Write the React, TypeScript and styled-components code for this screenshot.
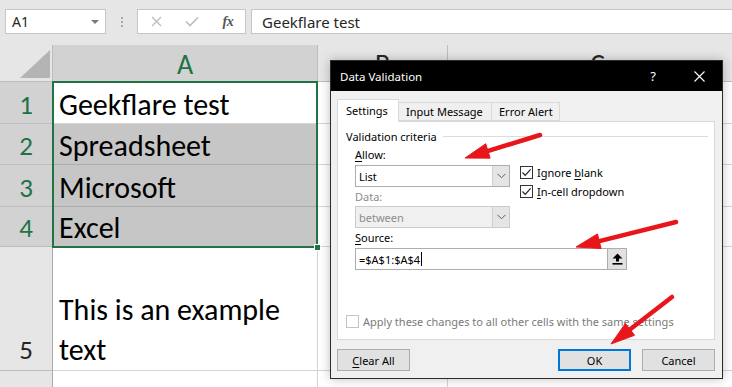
import React from "react";
import styled, { createGlobalStyle } from "styled-components";

const UI = `"Segoe UI", "Noto Sans", "Open Sans", sans-serif`;
const SHEET = `Calibri, Carlito, Lato, "Noto Sans", sans-serif`;

const GlobalStyle = createGlobalStyle`
  html, body { margin: 0; padding: 0; background: #fff; }
  body { width: 732px; height: 387px; overflow: hidden; }
  * { box-sizing: border-box; }
`;

const Page = styled.div`
  position: relative;
  width: 732px;
  height: 387px;
  overflow: hidden;
  display: flex;
  flex-direction: column;
  background: #e6e6e6;
`;

/* ---------- formula bar ---------- */
const FormulaBar = styled.div`
  height: 45px;
  flex: none;
  display: flex;
  align-items: flex-start;
  padding: 9px 0 0 5px;
  background: #e6e6e6;
  font-family: ${UI};
`;

const NameBox = styled.div`
  width: 101px;
  height: 25px;
  flex: none;
  background: #fff;
  border: 1px solid #c6c6c6;
  display: flex;
  align-items: center;
  justify-content: space-between;
  padding: 0 6px 0 6px;
  font-size: 14px;
  color: #262626;
`;

const Caret = styled.span`
  width: 0;
  height: 0;
  border-left: 4px solid transparent;
  border-right: 4px solid transparent;
  border-top: 4px solid #7a7a7a;
`;

const Grip = styled.div`
  width: 31px;
  height: 25px;
  flex: none;
  display: flex;
  flex-direction: column;
  align-items: center;
  justify-content: center;
  gap: 2px;
`;

const GripDot = styled.span`
  width: 2px;
  height: 2px;
  background: #a8a8a8;
`;

const FxBox = styled.div`
  width: 109px;
  height: 25px;
  flex: none;
  background: #fff;
  border: 1px solid #c6c6c6;
  display: flex;
  align-items: center;
`;

const FxSlot = styled.div<{ $w: number }>`
  width: ${(p) => p.$w}px;
  height: 100%;
  display: flex;
  align-items: center;
  justify-content: center;
`;

const FxText = styled.span`
  font-family: "Liberation Serif", serif;
  font-style: italic;
  font-weight: bold;
  font-size: 14px;
  color: #555;
  letter-spacing: -0.5px;
`;

const FormulaInput = styled.div`
  flex: 1;
  margin-left: 5px;
  height: 25px;
  background: #fff;
  border: 1px solid #c6c6c6;
  border-right: none;
  display: flex;
  align-items: center;
  padding-left: 10px;
  font-size: 15px;
  color: #262626;
`;

/* ---------- sheet grid ---------- */
const Sheet = styled.div`
  flex: 1;
  position: relative;
  display: grid;
  grid-template-columns: 53px 265px 130px 300px;
  grid-template-rows: 37px 42px 41px 42px 40px 124px 42px;
  background: #fff;
  font-family: ${SHEET};
`;

const Corner = styled.div`
  background: #e6e6e6;
  border-right: 1px solid #bdbdbd;
  border-bottom: 1px solid #bdbdbd;
  display: flex;
  justify-content: flex-end;
  align-items: flex-end;
  padding: 0 2px 3px 0;
`;

const CornerTriangle = styled.span`
  width: 0;
  height: 0;
  border-left: 30px solid transparent;
  border-bottom: 28px solid #b4b4b4;
`;

const ColHeader = styled.div<{ $sel?: boolean }>`
  background: ${(p) => (p.$sel ? "#d2d2d2" : "#e6e6e6")};
  border-right: 1px solid #bdbdbd;
  border-bottom: 1px solid #bdbdbd;
  display: flex;
  align-items: center;
  justify-content: center;
  font-size: 28px;
  color: ${(p) => (p.$sel ? "#217346" : "#262626")};
  padding-top: 2px;
`;

const RowHeader = styled.div<{ $sel?: boolean; $lh?: number; $pad?: number; $top?: boolean }>`
  background: ${(p) => (p.$sel ? "#d2d2d2" : "#e6e6e6")};
  border-right: 1px solid #ababab;
  border-bottom: 1px solid #bdbdbd;
  display: flex;
  align-items: ${(p) => (p.$top ? "flex-start" : "flex-end")};
  justify-content: center;
  font-size: 27px;
  line-height: ${(p) => p.$lh ?? 36}px;
  color: ${(p) => (p.$sel ? "#217346" : "#262626")};
  padding-top: ${(p) => (p.$top ? 10 : 0)}px;
  padding-bottom: ${(p) => p.$pad ?? 0}px;
  overflow: hidden;
`;

const Cell = styled.div<{ $shade?: boolean; $lh?: number; $pad?: number; $top?: boolean }>`
  background: ${(p) => (p.$shade ? "#c6c6c6" : "#fff")};
  border-right: 1px solid #d4d4d4;
  border-bottom: 1px solid ${(p) => (p.$shade ? "#adadad" : "#d4d4d4")};
  display: flex;
  align-items: ${(p) => (p.$top ? "flex-start" : "flex-end")};
  padding: ${(p) => (p.$top ? 10 : 0)}px 4px ${(p) => p.$pad ?? 0}px 6px;
  font-size: 30px;
  line-height: ${(p) => p.$lh ?? 36}px;
  color: #000;
  overflow: hidden;
`;

const Selection = styled.div`
  position: absolute;
  grid-column: 2 / 3;
  grid-row: 2 / 6;
  left: -1px;
  top: -1px;
  right: 0;
  bottom: -1px;
  border: 2px solid #217346;
  pointer-events: none;
`;

const FillHandle = styled.span`
  position: absolute;
  right: -5px;
  bottom: -5px;
  width: 7px;
  height: 7px;
  background: #217346;
  border: 1px solid #fff;
`;

/* ---------- dialog ---------- */
const Dialog = styled.div`
  position: absolute;
  left: 330px;
  top: 60px;
  width: 393px;
  height: 319px;
  background: #f0f0f0;
  border: 1px solid #2b2b2b;
  box-shadow: 0 0 10px rgba(0, 0, 0, 0.25);
  display: flex;
  flex-direction: column;
  font-family: ${UI};
  font-size: 11px;
  color: #000;
  z-index: 5;
`;

const TitleBar = styled.div`
  height: 30px;
  flex: none;
  background: #000;
  color: #fff;
  display: flex;
  align-items: center;
  padding-left: 9px;
  font-size: 11.5px;
`;

const TitleText = styled.span`
  flex: 1;
`;

const TitleBtn = styled.span<{ $w: number }>`
  width: ${(p) => p.$w}px;
  display: flex;
  justify-content: center;
  align-items: center;
  font-size: 13px;
`;

const Body = styled.div`
  flex: 1;
  display: flex;
  flex-direction: column;
  padding: 8px 7px 0 6px;
`;

const TabRow = styled.div`
  display: flex;
  align-items: flex-end;
  height: 22px;
  position: relative;
  z-index: 1;
`;

const Tab = styled.div<{ $active?: boolean; $w: number }>`
  width: ${(p) => p.$w}px;
  height: ${(p) => (p.$active ? 23 : 19)}px;
  background: ${(p) => (p.$active ? "#fff" : "#f0f0f0")};
  border: 1px solid #d9d9d9;
  border-bottom: ${(p) => (p.$active ? "none" : "1px solid #d9d9d9")};
  margin-left: ${(p) => (p.$active ? 0 : -1)}px;
  margin-bottom: ${(p) => (p.$active ? -1 : 0)}px;
  display: flex;
  align-items: center;
  padding-left: ${(p) => (p.$active ? 8 : 7)}px;
  padding-bottom: ${(p) => (p.$active ? 1 : 0)}px;
`;

const Panel = styled.div`
  height: 219px;
  background: #fff;
  border: 1px solid #d9d9d9;
  display: flex;
  flex-direction: column;
  padding: 6px 6px 0 8px;
`;

const GroupTitle = styled.div`
  display: flex;
  align-items: center;
  gap: 6px;
  height: 16px;
`;

const GroupLine = styled.span`
  flex: 1;
  height: 1px;
  background: #dcdcdc;
`;

const Criteria = styled.div`
  padding-left: 9px;
  display: flex;
  flex-direction: column;
`;

const CriteriaTop = styled.div`
  display: flex;
  margin-top: 3px;
`;

const LeftCol = styled.div`
  width: 155px;
  display: flex;
  flex-direction: column;
`;

const Label = styled.div<{ $dim?: boolean; $gap?: number }>`
  height: 16px;
  line-height: 16px;
  color: ${(p) => (p.$dim ? "#8d8d8d" : "#000")};
  margin-bottom: ${(p) => p.$gap ?? 2}px;
`;

const Combo = styled.div<{ $disabled?: boolean }>`
  width: 155px;
  height: 22px;
  display: flex;
  border: 1px solid ${(p) => (p.$disabled ? "#cccccc" : "#adadad")};
  background: ${(p) => (p.$disabled ? "#f0f0f0" : "#fff")};
  color: ${(p) => (p.$disabled ? "#8d8d8d" : "#000")};
  margin-bottom: 2px;
`;

const ComboText = styled.span`
  flex: 1;
  display: flex;
  align-items: center;
  padding-left: 3px;
`;

const ComboBtn = styled.span`
  width: 17px;
  background: #e5e5e5;
  border-left: 1px solid #cfcfcf;
  display: flex;
  align-items: center;
  justify-content: center;
`;

const RightCol = styled.div`
  margin-left: 10px;
  padding-top: 19px;
  display: flex;
  flex-direction: column;
  gap: 6px;
`;

const CheckRow = styled.div<{ $dim?: boolean }>`
  display: flex;
  align-items: center;
  gap: 4px;
  height: 13px;
  color: ${(p) => (p.$dim ? "#7a7a7a" : "#000")};
`;

const Box = styled.span<{ $dim?: boolean }>`
  width: 13px;
  height: 13px;
  flex: none;
  border: 1px solid ${(p) => (p.$dim ? "#c4c4c4" : "#333")};
  background: #fff;
  display: flex;
  align-items: center;
  justify-content: center;
`;

const SourceRow = styled.div`
  display: flex;
  width: 272px;
  height: 22px;
`;

const SourceInput = styled.div`
  flex: 1;
  border: 1px solid #adadad;
  border-right: none;
  background: #fff;
  display: flex;
  align-items: center;
  padding-left: 3px;
`;

const Caretline = styled.span`
  width: 1px;
  height: 14px;
  background: #000;
  margin-left: 1px;
`;

const RefBtn = styled.span`
  width: 20px;
  border: 1px solid #adadad;
  background: #e1e1e1;
  display: flex;
  align-items: center;
  justify-content: center;
`;

const ApplyRow = styled.div`
  margin-top: auto;
  margin-bottom: 11px;
`;

const Footer = styled.div`
  display: flex;
  align-items: center;
  gap: 11px;
  margin-top: 9px;
`;

const FooterSpacer = styled.span`
  flex: 1;
`;

const Button = styled.div<{ $primary?: boolean }>`
  width: 73px;
  height: 22px;
  background: #e1e1e1;
  border: ${(p) => (p.$primary ? "2px solid #0078d7" : "1px solid #adadad")};
  display: flex;
  align-items: center;
  justify-content: center;
`;

const U = styled.span`
  text-decoration: underline;
  text-underline-offset: 2px;
`;

/* ---------- arrows overlay ---------- */
const Overlay = styled.svg`
  position: absolute;
  left: 0;
  top: 0;
  width: 732px;
  height: 387px;
  pointer-events: none;
  z-index: 10;
`;

const Arrow = ({ x1, y1, x2, y2 }: { x1: number; y1: number; x2: number; y2: number }) => {
  const dx = x2 - x1;
  const dy = y2 - y1;
  const len = Math.hypot(dx, dy);
  const ux = dx / len;
  const uy = dy / len;
  const L = 24;
  const W = 7.5;
  const bx = x2 - ux * L;
  const by = y2 - uy * L;
  const px = -uy;
  const py = ux;
  const pts = `${x2},${y2} ${bx + px * W},${by + py * W} ${bx - px * W},${by - py * W}`;
  return (
    <g fill="#e8161b" stroke="#e8161b">
      <line x1={x1} y1={y1} x2={bx + ux * 3} y2={by + uy * 3} strokeWidth={4.5} strokeLinecap="round" />
      <polygon points={pts} strokeWidth={1} strokeLinejoin="round" />
    </g>
  );
};

const Check = () => (
  <svg width="11" height="11" viewBox="0 0 11 11">
    <path d="M1.5 5.5 L4.2 8.3 L9.6 2.4" fill="none" stroke="#222" strokeWidth="1.2" />
  </svg>
);

const Chevron = () => (
  <svg width="9" height="6" viewBox="0 0 9 6">
    <path d="M0.5 0.8 L4.5 4.8 L8.5 0.8" fill="none" stroke="#606060" strokeWidth="1" />
  </svg>
);

const rows = [
  { n: "1", t: "Geekflare test", shade: false },
  { n: "2", t: "Spreadsheet", shade: true },
  { n: "3", t: "Microsoft", shade: true },
  { n: "4", t: "Excel", shade: true },
];

export default function App() {
  return (
    <>
      <GlobalStyle />
      <Page>
        <FormulaBar>
          <NameBox>
            <span>A1</span>
            <Caret />
          </NameBox>
          <Grip>
            <GripDot />
            <GripDot />
            <GripDot />
          </Grip>
          <FxBox>
            <FxSlot $w={37}>
              <svg width="11" height="11" viewBox="0 0 11 11">
                <path d="M1 1 L10 10 M10 1 L1 10" stroke="#bdbdbd" strokeWidth="1.3" />
              </svg>
            </FxSlot>
            <FxSlot $w={37}>
              <svg width="14" height="11" viewBox="0 0 14 11">
                <path d="M1 5.5 L5 9.5 L13 1.5" fill="none" stroke="#bdbdbd" strokeWidth="1.6" />
              </svg>
            </FxSlot>
            <FxSlot $w={35}>
              <FxText>fx</FxText>
            </FxSlot>
          </FxBox>
          <FormulaInput>Geekflare test</FormulaInput>
        </FormulaBar>

        <Sheet>
          <Corner>
            <CornerTriangle />
          </Corner>
          <ColHeader $sel>A</ColHeader>
          <ColHeader>B</ColHeader>
          <ColHeader>C</ColHeader>

          {rows.map((r) => (
            <React.Fragment key={r.n}>
              <RowHeader $sel>{r.n}</RowHeader>
              <Cell $shade={r.shade}>{r.t}</Cell>
              <Cell />
              <Cell />
            </React.Fragment>
          ))}

          <RowHeader $lh={40}>5</RowHeader>
          <Cell $lh={40}>
            <span>This is an example text</span>
          </Cell>
          <Cell />
          <Cell />

          <RowHeader $top>6</RowHeader>
          <Cell $top>look</Cell>
          <Cell />
          <Cell />

          <Selection>
            <FillHandle />
          </Selection>
        </Sheet>

        <Dialog>
          <TitleBar>
            <TitleText>Data Validation</TitleText>
            <TitleBtn $w={30}>?</TitleBtn>
            <TitleBtn $w={16} />
            <TitleBtn $w={30}>
              <svg width="11" height="11" viewBox="0 0 11 11">
                <path d="M0.5 0.5 L10.5 10.5 M10.5 0.5 L0.5 10.5" stroke="#fff" strokeWidth="1.1" />
              </svg>
            </TitleBtn>
            <TitleBtn $w={8} />
          </TitleBar>
          <Body>
            <TabRow>
              <Tab $active $w={62}>Settings</Tab>
              <Tab $w={94}>Input Message</Tab>
              <Tab $w={69}>Error Alert</Tab>
            </TabRow>
            <Panel>
              <GroupTitle>
                <span>Validation criteria</span>
                <GroupLine />
              </GroupTitle>
              <Criteria>
                <CriteriaTop>
                  <LeftCol>
                    <Label>
                      <U>A</U>llow:
                    </Label>
                    <Combo>
                      <ComboText>List</ComboText>
                      <ComboBtn>
                        <Chevron />
                      </ComboBtn>
                    </Combo>
                    <Label $dim $gap={1}>Data:</Label>
                    <Combo $disabled>
                      <ComboText>between</ComboText>
                      <ComboBtn>
                        <Chevron />
                      </ComboBtn>
                    </Combo>
                  </LeftCol>
                  <RightCol>
                    <CheckRow>
                      <Box>
                        <Check />
                      </Box>
                      <span>
                        Ignore <U>b</U>lank
                      </span>
                    </CheckRow>
                    <CheckRow>
                      <Box>
                        <Check />
                      </Box>
                      <span>
                        <U>I</U>n-cell dropdown
                      </span>
                    </CheckRow>
                  </RightCol>
                </CriteriaTop>
                <Label>
                  <U>S</U>ource:
                </Label>
                <SourceRow>
                  <SourceInput>
                    =$A$1:$A$4
                    <Caretline />
                  </SourceInput>
                  <RefBtn>
                    <svg width="11" height="12" viewBox="0 0 11 12">
                      <path d="M5.5 0.5 L10.5 5.5 L7 5.5 L7 8.5 L4 8.5 L4 5.5 L0.5 5.5 Z" fill="#000" />
                      <rect x="0.5" y="10" width="10" height="1.6" fill="#000" />
                    </svg>
                  </RefBtn>
                </SourceRow>
              </Criteria>
              <ApplyRow>
                <CheckRow $dim>
                  <Box $dim />
                  <span>Apply these changes to all other cells with the same settings</span>
                </CheckRow>
              </ApplyRow>
            </Panel>
            <Footer>
              <Button>
                <span>
                  <U>C</U>lear All
                </span>
              </Button>
              <FooterSpacer />
              <Button $primary>OK</Button>
              <Button>Cancel</Button>
            </Footer>
          </Body>
        </Dialog>

        <Overlay viewBox="0 0 732 387">
          <Arrow x1={540} y1={135} x2={465} y2={158} />
          <Arrow x1={676} y1={222} x2={576} y2={247} />
          <Arrow x1={672} y1={297} x2={611} y2={344} />
        </Overlay>
      </Page>
    </>
  );
}
